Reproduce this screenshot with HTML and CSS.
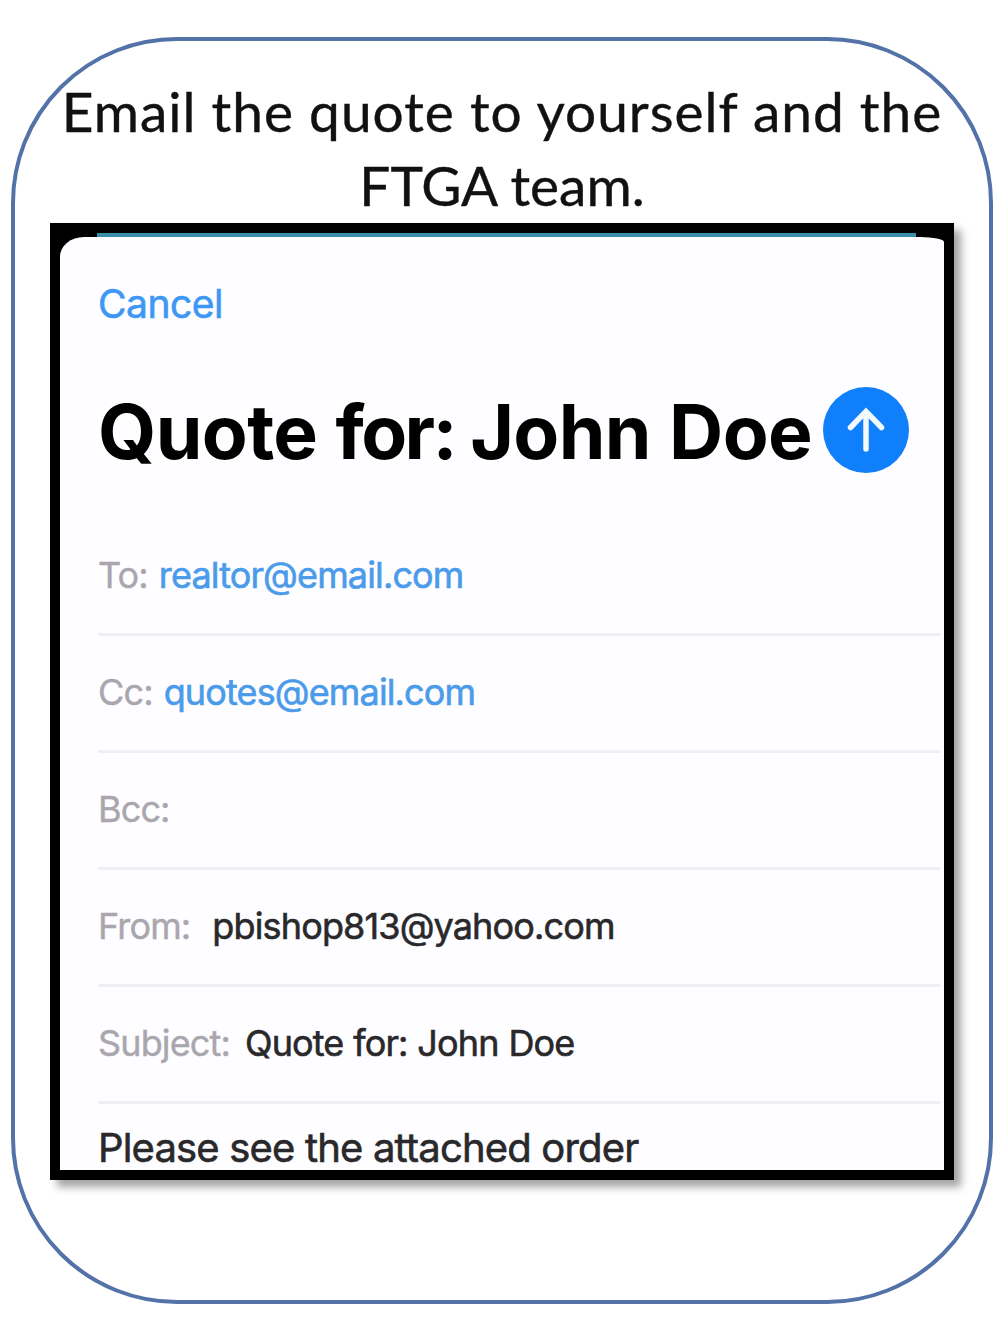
FILE: index.html
```html
<!DOCTYPE html>
<html lang="en">
<head>
  <meta charset="UTF-8">
  <meta name="viewport" content="width=device-width, initial-scale=1.0">
  <title>Email the quote</title>
  <link rel="stylesheet" href="styles.css">
</head>
<body>
  <div class="card">
    <h1>
      <span class="line-1">Email the quote to yourself and the</span>
      <span class="line-2">FTGA team.</span>
    </h1>

    <div class="phone">
      <div class="sheet">
        <div class="cancel"><span>Cancel</span></div>

        <div class="title-row">
          <h2>Quote <span class="for">for:</span> <span class="name">John Doe</span></h2>
          <svg class="send" viewBox="0 0 86 86">
            <circle cx="43" cy="43" r="43" fill="#107ffc"/>
            <path d="M43 62V26M27.500 40.500L43 24.500L58.500 40.500" fill="none" stroke="#f4f8ff" stroke-width="5.500" stroke-linecap="round"/>
          </svg>
        </div>

        <div class="row to"><span class="label">To:</span><span class="value link">realtor@email.com</span></div>
        <div class="row to"><span class="label">Cc:</span><span class="value link">quotes@email.com</span></div>
        <div class="row"><span class="label">Bcc:</span></div>
        <div class="row from"><span class="label">From:</span><span class="value">pbishop813@yahoo.com</span></div>
        <div class="row"><span class="label">Subject:</span><span class="value">Quote for: John Doe</span></div>

        <p class="message">Please see the attached order</p>
      </div>
    </div>
  </div>
</body>
</html>
```

FILE: styles.css
```css
* {
  box-sizing: border-box;
}

body {
  margin: 0;
  padding: 37px 7px 30px 11px;
  background: #fff;
  font-family: Inter, "Liberation Sans", sans-serif;
}

.card {
  height: 1267px;
  padding: 33px 35px 0;
  border: 4px solid #5272a8;
  border-radius: 166px;
}

h1 {
  display: flex;
  flex-direction: column;
  align-items: center;
  margin: 0;
  height: 149px;
  font-family: Lato, sans-serif;
  font-size: 55px;
  font-weight: 400;
  line-height: 74px;
  white-space: nowrap;
  color: #111;
  -webkit-text-stroke: 0.4px #111;
}

.line-1 {
  letter-spacing: 1px;
}

.phone {
  width: 904px;
  height: 957px;
  border: 10px solid #000;
  background: #000;
  box-shadow: 7px 7px 8px rgba(0, 0, 0, 0.36);
}

/* thin strip of the screen behind the sheet */
.phone::before {
  content: "";
  display: block;
  height: 4px;
  margin: 0 28px 0 37px;
  background: #3b8eaa;
}

.sheet {
  height: 933px;
  padding-left: 38px;
  border-radius: 24px 24px 0 0 / 20px 5px 0 0;
  background: #fefdff;
}

.cancel {
  padding-top: 43px;
  height: 150px;
  font-size: 39px;
  line-height: 48px;
  letter-spacing: -0.5px;
  color: #3c98f4;
  -webkit-text-stroke: 0.6px #3c98f4;
}

.title-row {
  display: flex;
  justify-content: space-between;
  height: 132px;
  padding-right: 35px;
}

h2 {
  margin: 0;
  font-size: 75px;
  font-weight: 700;
  line-height: 90px;
  letter-spacing: -0.6px;
  word-spacing: 1px;
  white-space: nowrap;
  color: #000;
}

.for {
  letter-spacing: -2.6px;
}

.name {
  margin-left: -3px;
}

.send {
  flex: none;
  width: 86px;
  height: 86px;
}

.row {
  display: flex;
  height: 117px;
  margin-right: 4px;
  padding-top: 34px;
  border-bottom: 3px solid #f1eff3;
  font-size: 36px;
  line-height: 44px;
  letter-spacing: -0.86px;
  white-space: nowrap;
}

.label {
  margin-right: 15px;
  color: #aaa6ad;
  -webkit-text-stroke: 0.4px #aaa6ad;
}

.to .label {
  margin-right: 11px;
}

.from .label {
  margin-right: 22px;
}

.value {
  word-spacing: 0.5px;
  color: #29282b;
  -webkit-text-stroke: 0.6px #29282b;
}

.link {
  color: #4a9bea;
  -webkit-text-stroke: 0.6px #4a9bea;
}

.message {
  margin: 0;
  padding-top: 21px;
  font-size: 40px;
  line-height: 46px;
  letter-spacing: -0.83px;
  white-space: nowrap;
  color: #29282b;
  -webkit-text-stroke: 0.6px #29282b;
}
```
